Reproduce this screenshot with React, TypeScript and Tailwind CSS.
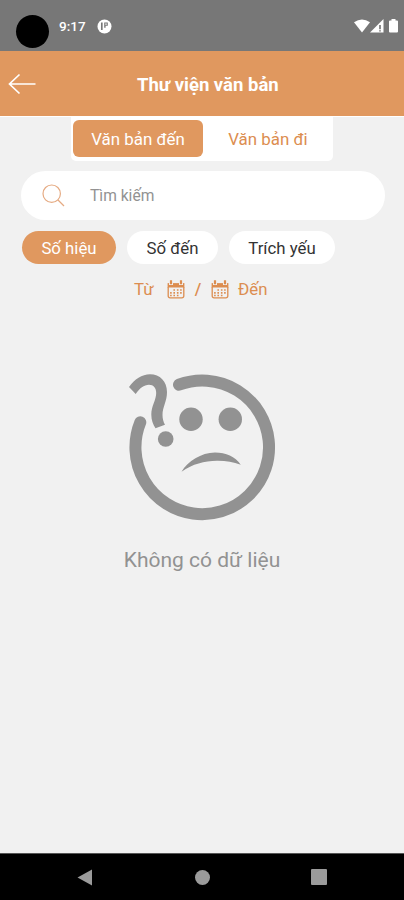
import clsx from "clsx";

const filters = [
  { label: "Số hiệu", width: "w-[94px]", active: true },
  { label: "Số đến", width: "w-[91px]", active: false },
  { label: "Trích yếu", width: "w-[106px]", active: false },
];

function StatusBar() {
  return (
    <div className="flex h-[51px] items-start bg-[#777777] pl-4 pr-[6px]">
      <div className="mt-[15px] size-[33px] rounded-full bg-black" />
      <span className="ml-[10px] mt-[17px] w-[28px] text-[13.5px] font-medium leading-[19px] text-white">
        9:17
      </span>
      <svg className="ml-[10px] mt-[19px]" width="15" height="15" viewBox="0 0 15 15">
        <circle cx="7.5" cy="7.5" r="7" fill="#fff" />
        <path d="M4.8 3.5v7.5" fill="none" stroke="#777" strokeWidth="1.7" />
        <path d="M7.2 3.4h3.6v3.4H8.6v2H7.2z" fill="#777" />
        <path d="M8.3 4.5h1.4v1.2H8.3z" fill="#fff" />
      </svg>
      <div className="ml-auto mt-[19px] flex items-start">
        <svg width="16" height="14" viewBox="0 0 16 14" fill="#fff">
          <path d="M0 3.2Q8-2.4 16 3.2L8 13.5z" />
        </svg>
        <svg width="14" height="14" viewBox="0 0 14 14">
          <path d="M0 13.5 13.5 0v13.5z" fill="#fff" />
          <path d="M10 6v4.2M10 11.2v1.3" stroke="#777" strokeWidth="1.7" />
        </svg>
        <svg className="ml-[5px]" width="9" height="14" viewBox="0 0 9 14" fill="#fff">
          <path d="M2.5 0h4v1.4H8a1 1 0 0 1 1 1v10a1 1 0 0 1-1 1H1a1 1 0 0 1-1-1v-10a1 1 0 0 1 1-1h1.5z" />
        </svg>
      </div>
    </div>
  );
}

function Header() {
  return (
    <header className="flex h-[66px] items-center border-b border-white bg-[#e0985f] pl-2">
      <svg width="28" height="22" viewBox="0 0 28 22" fill="none" stroke="#fff" strokeWidth="1.7">
        <path d="M27.5 11H1.5M11.5 1.5 1.5 11l10 9.5" />
      </svg>
      <h1 className="ml-[101px] whitespace-nowrap pt-[3px] text-[18.5px] font-bold leading-6 text-white">
        Thư viện văn bản
      </h1>
    </header>
  );
}

function CalendarIcon() {
  return (
    <svg width="18" height="19" viewBox="0 0 18 19" fill="none" stroke="#dc8d50">
      <path d="M1.2 7v9a1.8 1.8 0 0 0 1.8 1.8h12a1.8 1.8 0 0 0 1.8-1.8V7" strokeWidth="1.3" />
      <path d="M.6 5.3h16.8" strokeWidth="4.4" />
      <path d="M4 .5v4.5M14 .5v4.5" stroke="#f1f1f1" strokeWidth="4" />
      <path d="M4 .3v4M14 .3v4" strokeWidth="2.2" />
      <path d="M6.4 10h1.6M9.9 10h1.6M13.1 10h1.6M3.1 12.8h1.6M6.4 12.8h1.6M9.9 12.8h1.6M13.1 12.8h1.6M3.1 15.5h1.6M6.4 15.5h1.6M9.9 15.5h1.6" strokeWidth="1.7" />
    </svg>
  );
}

function ConfusedFace() {
  return (
    <svg width="148" height="150" viewBox="0 0 148 150" fill="#929292">
      <path
        d="M51 12.7A66.8 66.8 0 1 1 12.3 50.3"
        fill="none"
        stroke="#929292"
        strokeWidth="12"
        strokeLinecap="round"
      />
      <path d="M1 15C6.500 7 14 2.200 22 2.200C32 2.200 39 9.500 39 20C39 29.500 34.500 35 34.500 43C34.500 47 35.500 50 37 52.800L27.500 56.300C25 52.500 23.300 48 23.300 42.500C23.300 34 28.200 28 28.200 21C28.200 16 25.500 12.800 21 12.800C16 12.800 11.500 16.500 7.700 22z" />
      <circle cx="37.7" cy="67" r="7.8" />
      <circle cx="63" cy="47.3" r="11.7" />
      <circle cx="102.3" cy="47.3" r="11.7" />
      <path d="M53.5 99.700C60 89 73 80.800 87 80.500C98 80.500 107 84.500 112.800 92.700C105 90 98 88.700 89 88.800C76 89 65 92 53.500 99.700z" />
    </svg>
  );
}

function NavigationBar() {
  return (
    <nav className="flex h-[47px] items-center justify-between border-t border-[#555] bg-black px-[77px]">
      <svg width="16" height="17" viewBox="0 0 16 17" fill="#9b9b9b">
        <path d="M.5 8.5 15 .5v16z" />
      </svg>
      <div className="size-[15px] rounded-full bg-[#9b9b9b]" />
      <div className="size-4 rounded-[1px] bg-[#9b9b9b]" />
    </nav>
  );
}

export default function App() {
  return (
    <div className="flex h-[900px] w-[404px] flex-col overflow-hidden bg-[#f1f1f1] font-['Roboto',sans-serif]">
      <StatusBar />
      <Header />

      <main className="flex flex-1 flex-col">
        <div className="ml-[71px] flex h-[44px] w-[262px] rounded-b-[5px] bg-white pl-[2px] pt-[3px]">
          <button className="h-[37px] w-[130px] rounded-[6px] bg-[#e0985f] text-[16.9px] leading-[39px] text-white">
            Văn bản đến
          </button>
          <button className="h-[37px] w-[130px] text-[16.9px] leading-[39px] text-[#dc8d50]">
            Văn bản đi
          </button>
        </div>

        <div className="ml-[21px] mt-[10px] flex h-[49px] w-[364px] items-center rounded-full bg-white pl-[21px]">
          <svg width="23" height="23" viewBox="0 0 23 23" fill="none" stroke="#e5aa82" strokeWidth="1.2">
            <circle cx="9.7" cy="9.7" r="8.7" />
            <path d="m16 16 6 6" />
          </svg>
          <span className="ml-[25px] pt-[3px] text-[15.6px] text-[#929292]">Tìm kiếm</span>
        </div>

        <div className="ml-[22px] mt-[11px] flex gap-[11px]">
          {filters.map((filter) => (
            <button
              key={filter.label}
              className={clsx(
                "h-[33px] rounded-full text-[16.8px] leading-[34px]",
                filter.width,
                filter.active ? "bg-[#e0985f] text-white" : "bg-white text-[#333]"
              )}
            >
              {filter.label}
            </button>
          ))}
        </div>

        <div className="ml-[134px] mt-[13px] flex h-6 items-center text-[16.8px] text-[#dc8d50]">
          <span className="w-[33px] pt-px">Từ</span>
          <CalendarIcon />
          <span className="w-[26px] pt-px text-center font-medium">/</span>
          <CalendarIcon />
          <span className="ml-[9px] pt-px">Đến</span>
        </div>

        <div className="mt-[71px] flex flex-col items-center">
          <ConfusedFace />
          <p className="mt-[24px] whitespace-nowrap text-[21px] leading-7 text-[#929292]">
            Không có dữ liệu
          </p>
        </div>
      </main>

      <NavigationBar />
    </div>
  );
}
